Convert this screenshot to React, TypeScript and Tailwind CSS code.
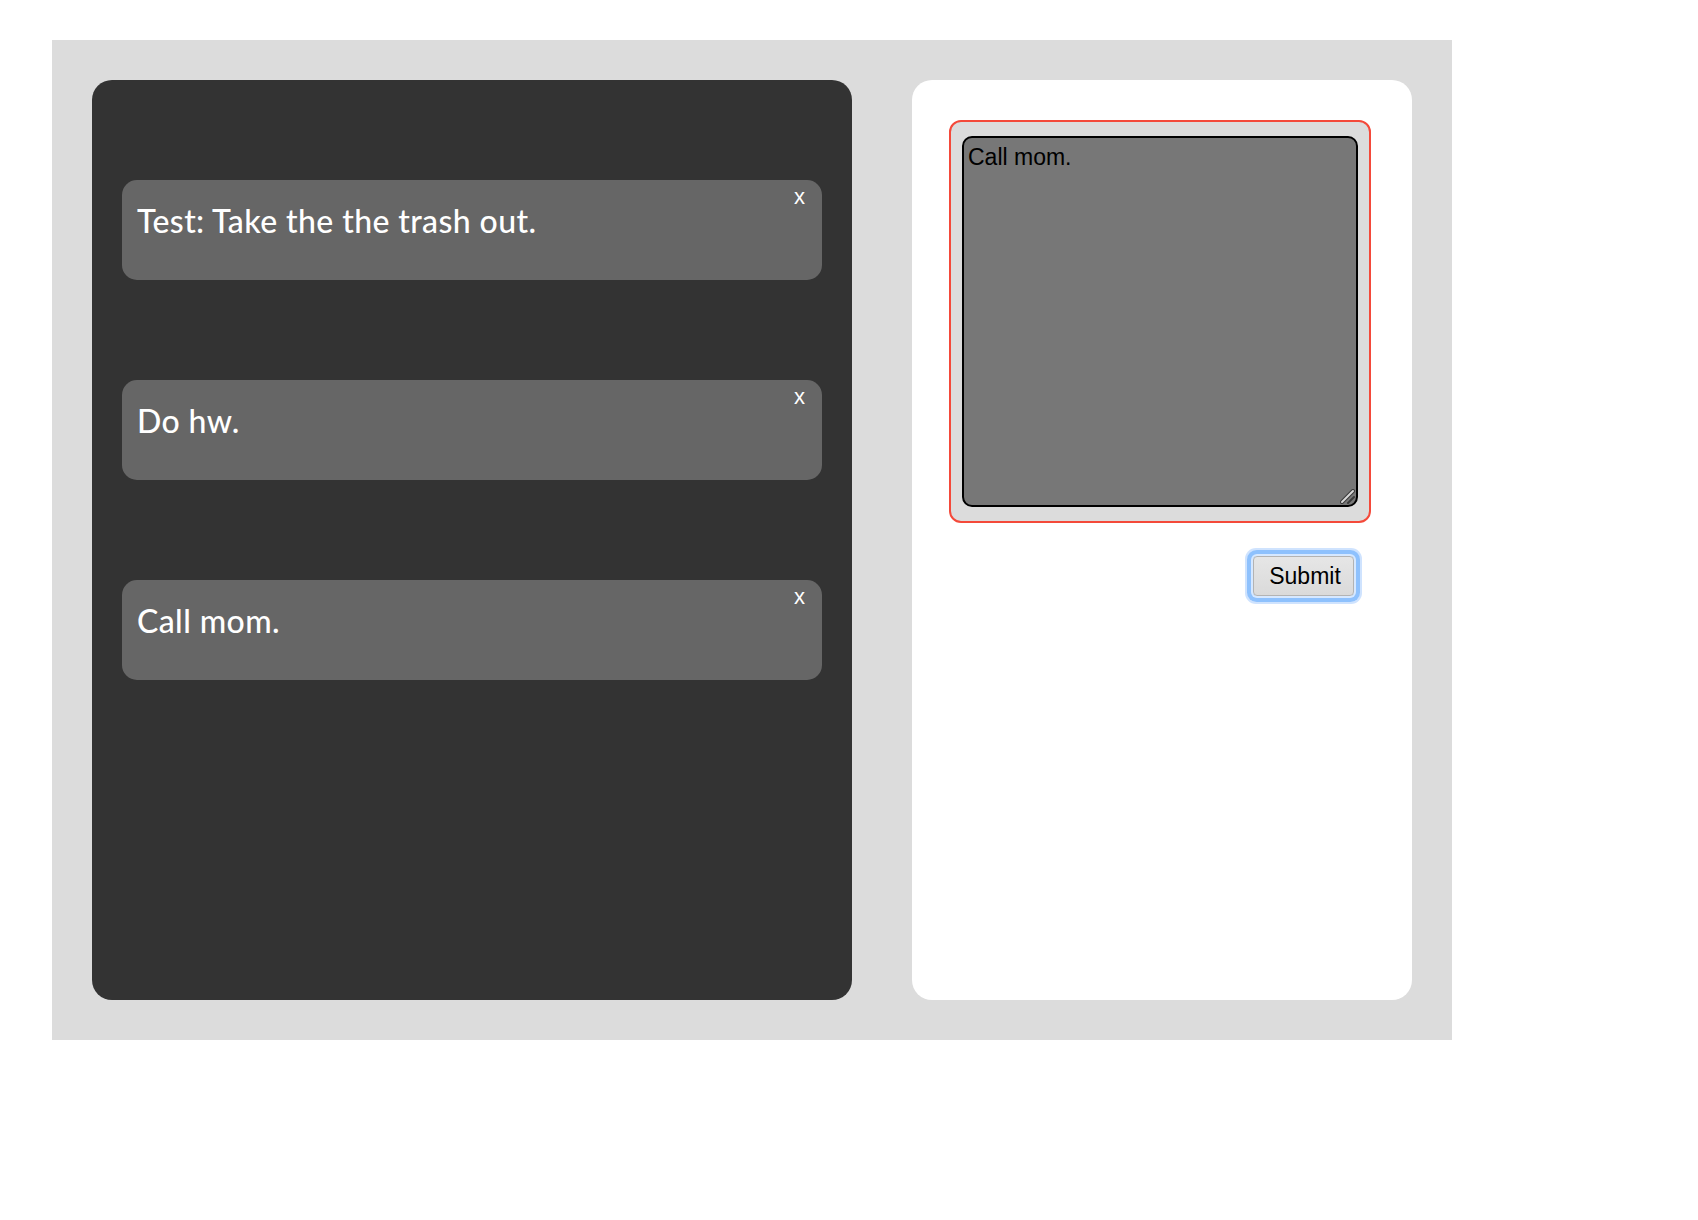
import React from "react";

const TODOS = ["Test: Take the the trash out.", "Do hw.", "Call mom."];

function TodoCard({ text }: { text: string }) {
  return (
    <div className="relative h-[100px] shrink-0 rounded-[15px] bg-[#666666] pl-[15px] pt-[22px]">
      <div className="font-['Lato','Open_Sans',sans-serif] text-[32px] font-medium leading-[38px] tracking-[0.4px] text-white">
        {text}
      </div>
      <span className="absolute right-[17px] top-[4px] cursor-pointer font-['Liberation_Sans',Arial,sans-serif] text-[22px] leading-[25px] text-white">
        x
      </span>
    </div>
  );
}

export default function App() {
  return (
    <div className="min-h-[1220px] bg-white pl-[52px] pt-[40px]">
      <div className="flex h-[1000px] w-[1400px] gap-[60px] bg-[#dcdcdc] p-[40px]">
        {/* list */}
        <div className="flex h-[920px] w-[760px] flex-col gap-[100px] rounded-[20px] bg-[#333333] px-[30px] pt-[100px]">
          {TODOS.map((t) => (
            <TodoCard key={t} text={t} />
          ))}
        </div>

        {/* form */}
        <div className="flex h-[920px] w-[500px] flex-col rounded-[20px] bg-white pl-[37px] pt-[40px]">
          <div className="h-[403px] w-[422px] rounded-[12px] border-2 border-[#f4493a] bg-[#dcdcdc] px-[11px] py-[14px]">
            <div className="relative h-[371px] w-[396px]">
              <textarea
                defaultValue="Call mom."
                className="block h-full w-full resize-none rounded-[10px] border-2 border-black bg-[#777777] pl-[4px] pt-[6px] font-['Liberation_Sans',Arial,sans-serif] text-[23px] leading-[26px] text-black outline-none"
              />
              {/* resize grip */}
              <svg className="absolute bottom-[3px] right-[3px]" width="15" height="15" viewBox="0 0 15 15">
                <path d="M2 13 L13 2" stroke="#3a3a3a" strokeWidth="4" strokeLinecap="round" />
                <path d="M2 13 L13 2" stroke="#d8d8d8" strokeWidth="2" strokeLinecap="round" />
                <path d="M8 14 L14 8" stroke="#3a3a3a" strokeWidth="2" strokeLinecap="round" />
              </svg>
            </div>
          </div>
          <div className="flex w-[422px] justify-end pr-[17px] pt-[33px]">
            <button className="h-[40px] w-[101px] rounded-[4px] border border-[#b3b3b3] bg-gradient-to-b from-[#e6e6e6] to-[#dadada] pl-[3px] font-['Liberation_Sans',Arial,sans-serif] text-[23px] leading-[26px] text-black shadow-[0_0_0_2px_#d6e8ff,0_0_0_6px_#8ec1fd,0_0_0_8px_#cfe3fe]">
              Submit
            </button>
          </div>
        </div>
      </div>
    </div>
  );
}
